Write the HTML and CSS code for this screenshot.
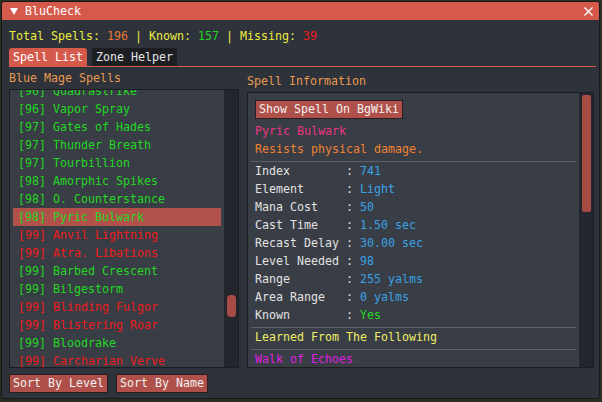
FILE: index.html
```html
<!DOCTYPE html>
<html>
<head>
<meta charset="utf-8">
<link rel="stylesheet" href="styles.css">
</head>
<body>
<div class="window">
  <div class="titlebar">
    <span class="tri"></span>
    <span class="title">BluCheck</span>
    <svg class="close" width="9" height="9" viewBox="0 0 9 9"><path d="M0.5 0.5 L8.5 8.5 M8.5 0.5 L0.5 8.5" stroke="#fff" stroke-width="1.4"/></svg>
  </div>
  <div class="body">
    <div class="stats"><span class="y">Total Spells: </span><span class="o">196</span><span class="y"> | Known: </span><span class="g">157</span><span class="y"> | Missing: </span><span class="r">39</span></div>
    <div class="tabs">
      <span class="tab active">Spell List</span>
      <span class="tab">Zone Helper</span>
    </div>
    <div class="columns">
      <div class="col">
        <div class="heading heading-left">Blue Mage Spells</div>
        <div class="child list-box">
          <div class="scroll-area">
            <div class="list">
              <div class="row g">[96] Quadrastrike</div>
              <div class="row g">[96] Vapor Spray</div>
              <div class="row g">[97] Gates of Hades</div>
              <div class="row g">[97] Thunder Breath</div>
              <div class="row g">[97] Tourbillion</div>
              <div class="row g">[98] Amorphic Spikes</div>
              <div class="row g">[98] O. Counterstance</div>
              <div class="row g sel">[98] Pyric Bulwark</div>
              <div class="row r">[99] Anvil Lightning</div>
              <div class="row r">[99] Atra. Libations</div>
              <div class="row g">[99] Barbed Crescent</div>
              <div class="row g">[99] Bilgestorm</div>
              <div class="row r">[99] Blinding Fulgor</div>
              <div class="row r">[99] Blistering Roar</div>
              <div class="row g">[99] Bloodrake</div>
              <div class="row r">[99] Carcharian Verve</div>
            </div>
          </div>
          <div class="scrollbar"><div class="grab grab-left"></div></div>
        </div>
        <div class="buttons">
          <span class="btn">Sort By Level</span>
          <span class="btn">Sort By Name</span>
        </div>
      </div>
      <div class="col">
        <div class="heading heading-right">Spell Information</div>
        <div class="child info-box">
          <div class="scroll-area info">
            <div class="info-btn-row"><span class="btn">Show Spell On BgWiki</span></div>
            <div class="line pink">Pyric Bulwark</div>
            <div class="line o2">Resists physical damage.</div>
            <div class="sep"></div>
            <div class="line kv">Index        : <span class="b">741</span></div>
            <div class="line kv">Element      : <span class="b">Light</span></div>
            <div class="line kv">Mana Cost    : <span class="b">50</span></div>
            <div class="line kv">Cast Time    : <span class="b">1.50 sec</span></div>
            <div class="line kv">Recast Delay : <span class="b">30.00 sec</span></div>
            <div class="line kv">Level Needed : <span class="b">98</span></div>
            <div class="line kv">Range        : <span class="b">255 yalms</span></div>
            <div class="line kv">Area Range   : <span class="b">0 yalms</span></div>
            <div class="line kv">Known        : <span class="g">Yes</span></div>
            <div class="sep"></div>
            <div class="line ly">Learned From The Following</div>
            <div class="sep"></div>
            <div class="line mag">Walk of Echoes</div>
          </div>
          <div class="scrollbar"><div class="grab grab-right"></div></div>
        </div>
      </div>
    </div>
  </div>
</div>
</body>
</html>
```

FILE: styles.css
```css
* { box-sizing: border-box; }
html, body { margin: 0; padding: 0; }
body {
  background: #2a2e22;
  width: 602px;
  height: 402px;
  overflow: hidden;
  font-family: "DejaVu Sans Mono", "Liberation Mono", monospace;
  font-size: 11.63px;
  line-height: 18px;
  color: #e6e6e6;
}
.window {
  margin: 1px 0 0 1px;
  width: 599px;
  height: 398px;
  background: #2e323a;
  border: 1px solid #17191c;
  border-radius: 3px;
  overflow: hidden;
  display: flex;
  flex-direction: column;
}
.titlebar {
  height: 18px;
  background: #d55a4c;
  display: flex;
  align-items: center;
  padding-left: 8px;
  color: #fff;
  flex: none;
}
.tri {
  width: 0; height: 0;
  border-left: 4px solid transparent;
  border-right: 4px solid transparent;
  border-top: 7px solid #fff;
  margin-right: 7px;
}
.title { flex: 1; }
.close { margin-right: 6px; }
.body {
  flex: 1;
  padding: 7px 3px 0 7px;
  display: flex;
  flex-direction: column;
}
.stats { height: 18px; white-space: pre; }
.y { color: #ecec40; }
.o { color: #e8783a; }
.g { color: #22d822; }
.r { color: #ee1c1c; }
.b { color: #3aa2e6; }
.tabs {
  margin-top: 3px;
  display: flex;
  gap: 5px;
  border-bottom: 1px solid #d55a4c;
  height: 19px;
}
.tab {
  height: 18px;
  padding: 0 4px;
  background: #1c1e22;
  color: #e6e6e6;
  border-radius: 3px 3px 0 0;
}
.tab.active { background: #d55a4c; color: #fff; }
.columns {
  display: grid;
  grid-template-columns: 230px 347px;
  column-gap: 8px;
}
.col { display: flex; flex-direction: column; }
.heading { color: #e89a50; height: 18px; }
.heading-left { margin-top: 2px; }
.heading-right { margin-top: 5px; }
.child {
  margin-top: 2px;
  background: #393d45;
  border: 1px solid #1b1d21;
  display: flex;
  overflow: hidden;
}
.list-box { height: 279px; }
.info-box { height: 276px; }
.scroll-area { flex: 1; overflow: hidden; min-width: 0; }
.list { margin-top: -8px; }
.row {
  height: 18px;
  margin: 0 3px;
  padding-left: 5px;
  white-space: pre;
}
.row.sel { background: #b0524a; }
.scrollbar {
  width: 14px;
  flex: none;
  background: #23262c;
  padding-left: 3px;
  padding-right: 2px;
}
.grab { background: #a84b45; border-radius: 4px; }
.grab-left { margin-top: 205px; height: 22px; }
.grab-right { margin-top: 2px; height: 117px; border-radius: 2px; }
.buttons {
  margin-top: 6px;
  display: flex;
  gap: 8px;
}
.btn {
  display: inline-block;
  height: 19px;
  line-height: 17px;
  padding: 0 3px;
  background: #b0504a;
  border: 1px solid #2a1e20;
  color: #f0f0f0;
  white-space: pre;
}
.info { padding: 7px 7px 0 7px; }
.info-btn-row { height: 19px; margin-bottom: 3px; display: flex; }
.line { height: 18px; white-space: pre; }
.pink { color: #f03484; }
.o2 { color: #f08232; }
.kv { color: #e2e2e2; }
.ly { color: #eeee66; }
.mag { color: #e01ee0; }
.sep {
  height: 4px;
  margin: 0 -4px;
  border-bottom: 1px solid #5c6068;
}
```
